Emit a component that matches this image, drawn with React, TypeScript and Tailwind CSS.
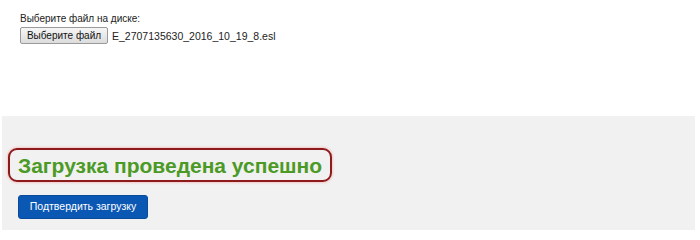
export default function App() {
  return (
    <div className="h-[231px] w-[700px] bg-white font-['Liberation_Sans',Arial,sans-serif]">
      {/* file picker */}
      <div className="h-[116px] pl-[20px] pt-[13px]">
        <p className="text-[10px] leading-[12px] text-[#222]">Выберите файл на диске:</p>
        <div className="mt-[2px] flex items-center gap-[4px]">
          <button className="h-[17px] w-[88px] rounded-[2px] border border-[#9a9a9a] bg-gradient-to-b from-[#f6f6f6] to-[#dcdcdc] text-[10px] leading-[12px] text-[#111]">
            Выберите файл
          </button>
          <span className="text-[10.5px] leading-[12px] text-[#222]">E_2707135630_2016_10_19_8.esl</span>
        </div>
      </div>

      {/* result */}
      <div className="ml-[2px] mr-[5px] h-[114px] bg-[#f1f1f1] pl-[6px] pt-[32px]">
        <div className="inline-flex h-[34px] items-center rounded-[9px] border-2 border-[#8e1b1b] px-[8px] shadow-[0_0_3px_#f29a9a]">
          <h2 className="text-[21px] font-bold leading-none text-[#4c9a26]">Загрузка проведена успешно</h2>
        </div>
        <div className="mt-[11px] pl-[10px]">
          <button className="h-[24px] w-[130px] rounded-[3px] border border-[#0a4a99] bg-[#0b58b4] text-[10.5px] text-white">
            Подтвердить загрузку
          </button>
        </div>
      </div>
    </div>
  )
}
